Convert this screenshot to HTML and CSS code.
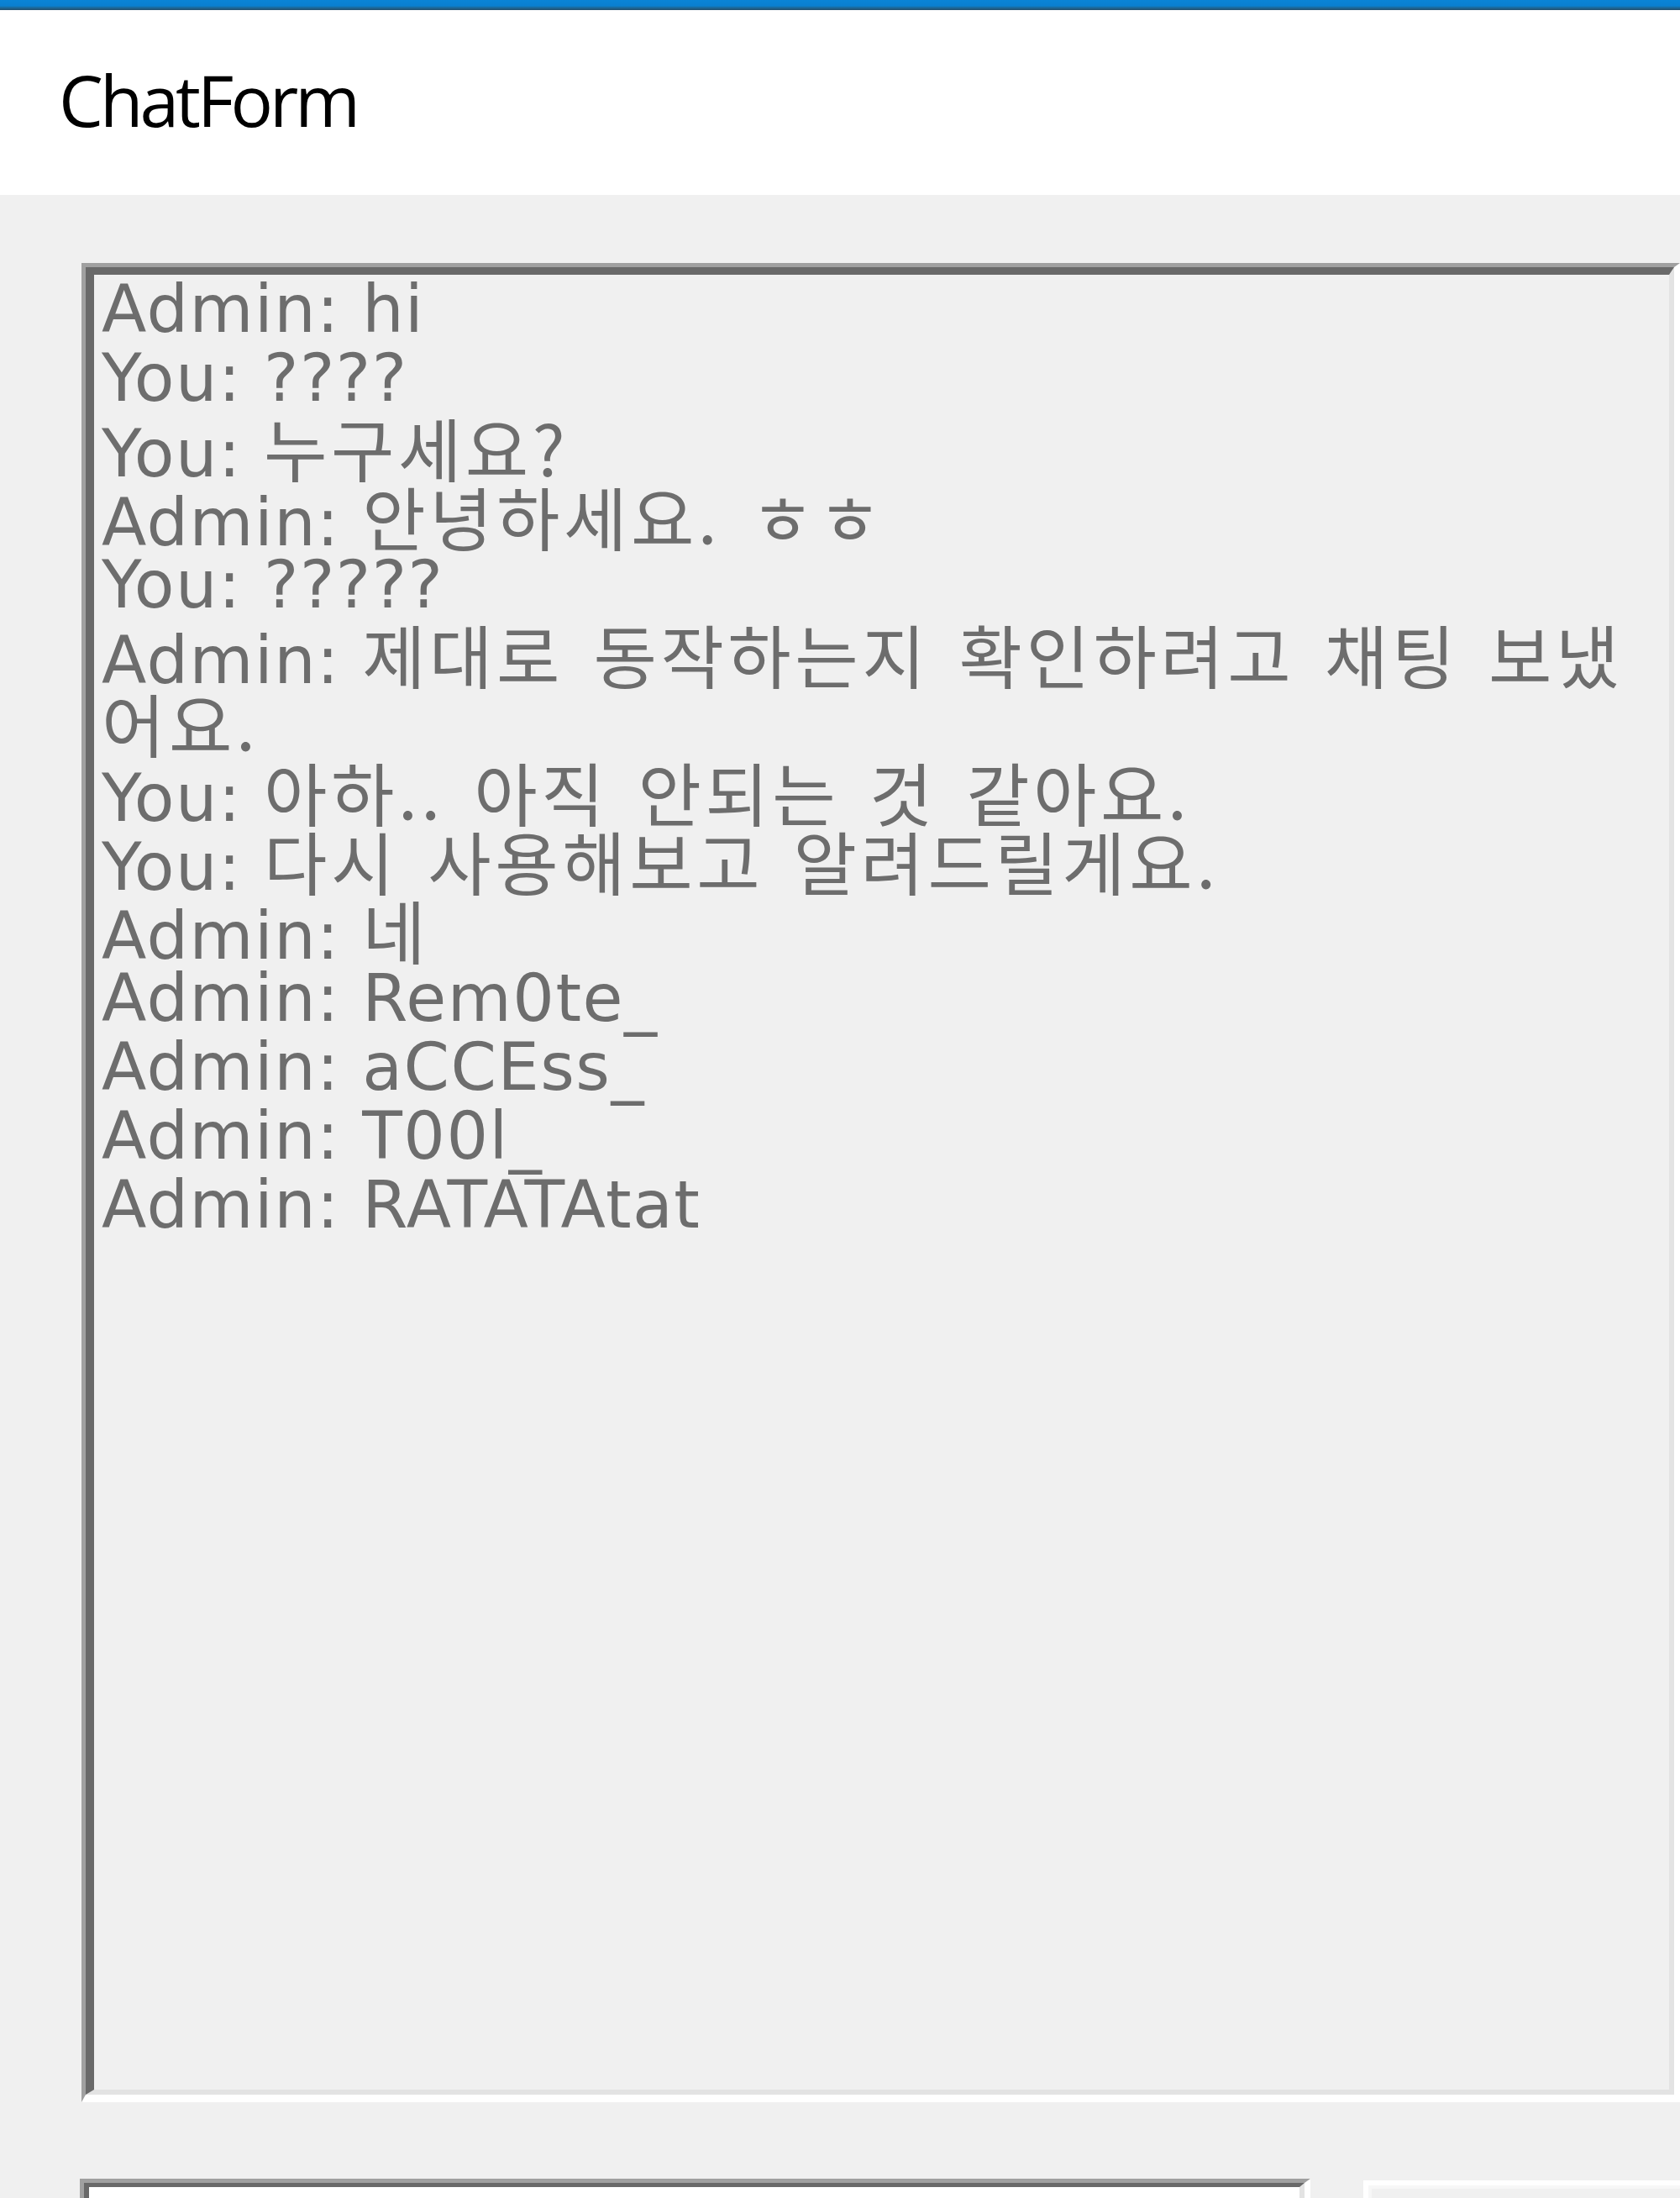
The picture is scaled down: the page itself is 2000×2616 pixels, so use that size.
FILE: index.html
```html
<!DOCTYPE html>
<html lang="ko">
<head>
<meta charset="utf-8">
<title>ChatForm</title>
<link rel="stylesheet" href="styles.css">
</head>
<body>
<div class="window">
  <div class="accent"></div>
  <header class="titlebar">
    <span class="title-text">ChatForm</span>
  </header>
  <main class="client">
    <div class="chatbox">
      <div class="chatinner">
        <div class="line">Admin: hi</div>
        <div class="line">You: ????</div>
        <div class="line">You: <span class="ko">누구세요?</span></div>
        <div class="line">Admin: <span class="ko">안녕하세요. ㅎㅎ</span></div>
        <div class="line">You: ?????</div>
        <div class="line">Admin: <span class="ko">제대로 동작하는지 확인하려고 채팅 보냈</span></div>
        <div class="line"><span class="ko">어요.</span></div>
        <div class="line">You: <span class="ko">아하.. 아직 안되는 것 같아요.</span></div>
        <div class="line">You: <span class="ko">다시 사용해보고 알려드릴게요.</span></div>
        <div class="line">Admin: <span class="ko">네</span></div>
        <div class="line">Admin: Rem0te_</div>
        <div class="line">Admin: aCCEss_</div>
        <div class="line">Admin: T00l_</div>
        <div class="line">Admin: RATATAtat</div>
      </div>
    </div>
    <div class="bottom">
      <div class="input"><div class="input-inner"></div></div>
      <div class="button"><div class="button-inner"></div></div>
    </div>
  </main>
</div>
</body>
</html>
```

FILE: styles.css
```css
html, body {
  margin: 0;
  padding: 0;
  background: #f0f0f0;
}

.window {
  width: 2000px;
  height: 2616px;
  overflow: hidden;
  background: #f0f0f0;
}

.accent {
  height: 12px;
  background: linear-gradient(to bottom, #0a84d6 0px, #0a7fd0 7px, #1b6a9c 9px, #24506e 12px);
}

.titlebar {
  height: 220px;
  background: #ffffff;
  padding-left: 70px;
  box-sizing: border-box;
}

.title-text {
  display: block;
  padding-top: 65px;
  font-family: "Open Sans", "Noto Sans", sans-serif;
  font-size: 84px;
  line-height: 84px;
  letter-spacing: -4px;
  color: #000000;
}

.client {
  padding: 81px 0 0 97px;
}

.chatbox {
  width: 1903px;
  height: 2189px;
  box-sizing: border-box;
  border-style: solid;
  border-width: 5px 7px 9px 5px;
  border-color: #a0a0a0 #ffffff #ffffff #a0a0a0;
}

.chatinner {
  height: 100%;
  box-sizing: border-box;
  border-style: solid;
  border-width: 9px 6px 6px 10px;
  border-color: #696969 #e3e3e3 #e3e3e3 #696969;
  background: #f0f0f0;
  padding: 0 0 0 9px;
  overflow: hidden;
}

.line {
  height: 82px;
  line-height: 82px;
  white-space: nowrap;
  font-family: "DejaVu Sans", "Noto Sans CJK KR", sans-serif;
  font-size: 78px;
  letter-spacing: 1.5px;
  color: #6d6d6d;
}

.ko {
  font-family: "Noto Sans CJK KR", "DejaVu Sans", sans-serif;
  font-size: 82px;
  letter-spacing: 4.5px;
  word-spacing: 8px;
}

.bottom {
  display: flex;
  gap: 63px;
  margin-top: 91px;
  margin-left: -2px;
  height: 140px;
}

.input {
  width: 1465px;
  box-sizing: border-box;
  border-style: solid;
  border-width: 5px 7px 9px 5px;
  border-color: #a0a0a0 #ffffff #ffffff #a0a0a0;
}

.input-inner {
  height: 100%;
  box-sizing: border-box;
  border-style: solid;
  border-width: 5px 6px 6px 6px;
  border-color: #696969 #e3e3e3 #e3e3e3 #696969;
  background: #ffffff;
}

.button {
  flex: 1;
  margin-top: 2px;
  box-sizing: border-box;
  border-style: solid;
  border-width: 6px 0 0 6px;
  border-color: #ffffff #696969 #696969 #ffffff;
  background: #e3e3e3;
}

.button-inner {
  height: 100%;
  background: #f0f0f0;
  border-top: 4px solid #f7f7f7;
  border-left: 4px solid #f7f7f7;
  box-sizing: border-box;
}
```
